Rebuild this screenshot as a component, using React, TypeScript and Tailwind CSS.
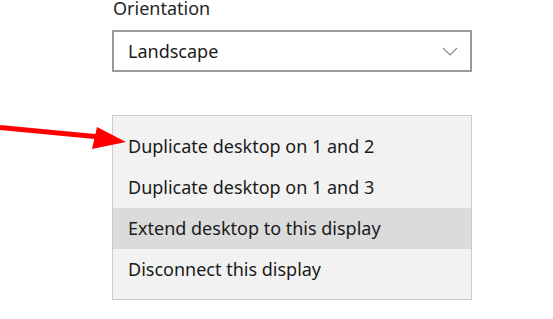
const items = [
  "Duplicate desktop on 1 and 2",
  "Duplicate desktop on 1 and 3",
  "Extend desktop to this display",
  "Disconnect this display",
];

export default function App() {
  return (
    <div
      className="relative h-[319px] w-[553px] overflow-hidden bg-white text-[#1a1a1a]"
      style={{ fontFamily: '"Noto Sans", "Open Sans", sans-serif' }}
    >
      <div className="ml-[112px] flex w-[360px] flex-col">
        <div className="h-[16px] pl-[1px] text-[18px] leading-[16px] text-[#262626]">
          Orientation
        </div>
        <div className="mt-[14px] flex h-[42px] items-center justify-between border-2 border-[#999999] bg-white pl-[14px] pr-[12px]">
          <span className="text-[18px]">Landscape</span>
          <svg width="16" height="9" viewBox="0 0 16 9" fill="none" stroke="#8a8a8a" strokeWidth="1.2">
            <polyline points="1,1 8,8 15,1" />
          </svg>
        </div>
        <div className="mt-[43px] flex h-[185px] flex-col border border-[#cccccc] bg-[#f2f2f2] pb-[7px] pt-[10px]">
          {items.map((t, i) => (
            <div
              key={t}
              className={`flex h-[41px] shrink-0 items-center pl-[15px] text-[18px] ${
                i === 2 ? "bg-[#dcdbdc]" : ""
              }`}
            >
              {t}
            </div>
          ))}
        </div>
      </div>

      {/* red callout arrow */}
      <svg className="absolute left-0 top-0" width="140" height="160" viewBox="0 0 140 160">
        <line x1="0" y1="127.5" x2="100" y2="137" stroke="#ff0000" strokeWidth="5" />
        <polygon points="97,127 126,142 92,149" fill="#ff0000" />
      </svg>
    </div>
  );
}
